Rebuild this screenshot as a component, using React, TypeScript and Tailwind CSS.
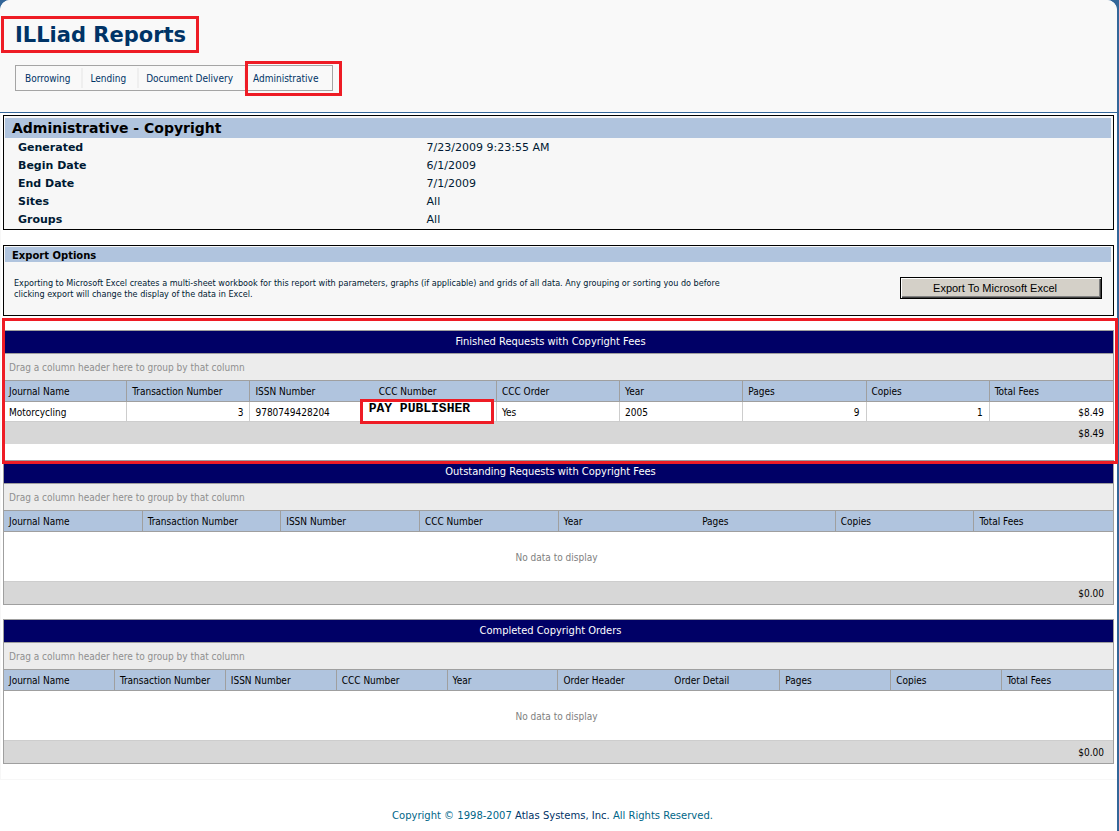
import { ReactNode } from "react";

const verdana = "font-['DejaVu_Sans',sans-serif]";
const tahoma = "font-['DejaVu_Sans_Condensed','DejaVu_Sans',sans-serif]";

const parameters = [
  ["Generated", "7/23/2009 9:23:55 AM"],
  ["Begin Date", "6/1/2009"],
  ["End Date", "7/1/2009"],
  ["Sites", "All"],
  ["Groups", "All"],
];

const menu = ["Borrowing", "Lending", "Document Delivery"];

type GridProps = {
  title: string;
  columns: string[];
  unruled: string;
  total: string;
  open?: boolean;
  children: ReactNode;
};

function Grid({ title, columns, unruled, total, open, children }: GridProps) {
  return (
    <section
      className={`${tahoma} border-x border-t border-[#9f9f9f] text-[10px] leading-3 text-black ${open ? "" : "border-b"}`}
    >
      <h2 className="h-[22px] bg-[#000066] pt-1 pr-4 text-center text-[11px] leading-[14px] text-white">
        {title}
      </h2>
      <p className="flex h-7 items-center border-y border-[#9f9f9f] bg-[#ececec] pt-0.5 pl-[5px] text-[#8f8f8f]">
        Drag a column header here to group by that column
      </p>
      <table className="w-full table-fixed border-separate border-spacing-0">
        <thead>
          <tr className="h-[21px] bg-[#b0c4de] text-left">
            {columns.map((name, i) => (
              <th
                key={name}
                scope="col"
                className={`border-b border-[#9f9f9f] p-0 pt-0.5 pl-[5px] font-normal whitespace-nowrap ${
                  i < columns.length - 1 && name !== unruled ? "border-r" : ""
                }`}
              >
                {name}
              </th>
            ))}
          </tr>
        </thead>
        <tbody>{children}</tbody>
        <tfoot>
          <tr className="h-[22px] bg-[#d7d7d7] text-right">
            <td colSpan={columns.length} className="p-0 pt-px pr-[9px]">
              {total}
            </td>
          </tr>
        </tfoot>
      </table>
    </section>
  );
}

function Empty({ span }: { span: number }) {
  return (
    <tr className="h-[50px]">
      <td
        colSpan={span}
        className="border-b border-[#cdcdcd] p-0 pt-0.5 pr-1 text-center text-[#808080]"
      >
        No data to display
      </td>
    </tr>
  );
}

function Cell({ children, right, last }: { children: ReactNode; right?: boolean; last?: boolean }) {
  return (
    <td
      className={`relative border-b border-[#cdcdcd] p-0 pt-0.5 ${last ? "pr-[9px]" : "border-r pr-1.5"} ${
        right ? "text-right" : "pl-[5px]"
      }`}
    >
      {children}
    </td>
  );
}

export default function App() {
  return (
    <div className={`${verdana} min-h-screen bg-[#336699]`}>
      <div className="mr-0.5 min-h-screen rounded-t-[10px] bg-white">
        <header className="rounded-t-[10px] border-b border-[#336699] bg-[#f9f9f9] pt-4 pb-[21px]">
          <h1 className="ml-px w-fit border-3 border-[#ee1c25] pt-0.5 pr-[10px] pl-[11px] text-[21px] leading-[29px] font-bold text-[#003366]">
            ILLiad Reports
          </h1>
          <nav
            className={`${tahoma} mt-3 ml-[15px] flex h-[26px] w-fit items-stretch border border-[#a5a5a5] p-0.5 text-[10px] leading-[22px] text-[#003366]`}
          >
            {menu.map((item) => (
              <a key={item} href="#" className="border-r-2 border-[#efefef] pr-[11px] pl-[7px]">
                {item}
              </a>
            ))}
            <a href="#" className="relative pr-3 pl-[7px]">
              Administrative
              <span className="absolute -top-[7px] -right-3 -bottom-2 -left-px border-3 border-[#ee1c25]" />
            </a>
          </nav>
        </header>

        <main className="border-b border-l border-[#f7f7f7] pt-0.5 pr-[3px] pb-[15px] pl-0.5">
          <section className="border border-black bg-[#f7f7f7] px-px pt-0.5">
            <h2 className="mr-px h-5 bg-[#b0c4de] pl-[7px] text-[14px] leading-[21px] font-bold text-black">
              Administrative - Copyright
            </h2>
            <table className="mt-px w-full table-fixed border-separate border-spacing-0 text-[11px] text-[#001a33]">
              <tbody>
                {parameters.map(([name, value]) => (
                  <tr key={name} className="h-[18px]">
                    <th scope="row" className="w-[37%] p-0 pl-[13px] text-left font-bold">
                      {name}
                    </th>
                    <td className="p-0 pl-3">{value}</td>
                  </tr>
                ))}
              </tbody>
            </table>
          </section>

          <section className="mt-[15px] border border-black bg-[#f7f7f7] px-px pt-px">
            <h2 className="mr-px h-[15px] bg-[#b0c4de] pl-[7px] text-[10px] leading-[17px] font-bold text-black">
              Export Options
            </h2>
            <div className="flex items-start justify-between pt-[15px] pr-[10px] pb-[15px] pl-[9px]">
              <p className={`${tahoma} w-[750px] pt-px text-[9px] leading-[11px] text-[#001a33]`}>
                Exporting to Microsoft Excel creates a multi-sheet workbook for this report with
                parameters, graphs (if applicable) and grids of all data. Any grouping or sorting you
                do before
                <br />
                clicking export will change the display of the data in Excel.
              </p>
              <button
                type="button"
                className="h-[22px] w-[202px] border border-black bg-[#d4d0c8] pr-3 font-['Liberation_Sans',Arial,sans-serif] text-[11px] leading-4 text-black shadow-[inset_1px_1px_0_#ffffff,inset_-1px_-1px_0_#404040,inset_-2px_-2px_0_#808080]"
              >
                Export To Microsoft Excel
              </button>
            </div>
          </section>

          <div className="relative mt-[14px]">
            <Grid
              title="Finished Requests with Copyright Fees"
              columns={[
                "Journal Name",
                "Transaction Number",
                "ISSN Number",
                "CCC Number",
                "CCC Order",
                "Year",
                "Pages",
                "Copies",
                "Total Fees",
              ]}
              unruled="ISSN Number"
              total="$8.49"
              open
            >
              <tr className="h-5">
                <Cell>Motorcycling</Cell>
                <Cell right>3</Cell>
                <Cell>9780749428204</Cell>
                <Cell>
                  <span className="absolute -top-[3px] right-0.5 -left-3.5 h-[25px] border-3 border-[#ee1c25] bg-white pl-1.5 font-['Liberation_Mono',monospace] text-[13px] leading-[13px] font-bold whitespace-nowrap">
                    PAY PUBLISHER
                  </span>
                </Cell>
                <Cell>Yes</Cell>
                <Cell>2005</Cell>
                <Cell right>9</Cell>
                <Cell right>1</Cell>
                <Cell right last>
                  $8.49
                </Cell>
              </tr>
            </Grid>
            <span className="pointer-events-none absolute -top-3 -right-1 -bottom-5 -left-px z-10 border-3 border-[#ee1c25]" />
          </div>

          <div className="mt-4">
            <Grid
              title="Outstanding Requests with Copyright Fees"
              columns={[
                "Journal Name",
                "Transaction Number",
                "ISSN Number",
                "CCC Number",
                "Year",
                "Pages",
                "Copies",
                "Total Fees",
              ]}
              unruled="Year"
              total="$0.00"
            >
              <Empty span={8} />
            </Grid>
          </div>

          <div className="mt-[14px]">
            <Grid
              title="Completed Copyright Orders"
              columns={[
                "Journal Name",
                "Transaction Number",
                "ISSN Number",
                "CCC Number",
                "Year",
                "Order Header",
                "Order Detail",
                "Pages",
                "Copies",
                "Total Fees",
              ]}
              unruled="Order Header"
              total="$0.00"
            >
              <Empty span={10} />
            </Grid>
          </div>
        </main>

        <footer className="pt-7 pr-3 text-center text-[10px] leading-4 text-[#006688]">
          Copyright © 1998-2007{" "}
          <a href="#" className="text-[#003366]">
            Atlas Systems, Inc.
          </a>{" "}
          All Rights Reserved.
        </footer>
      </div>
    </div>
  );
}
